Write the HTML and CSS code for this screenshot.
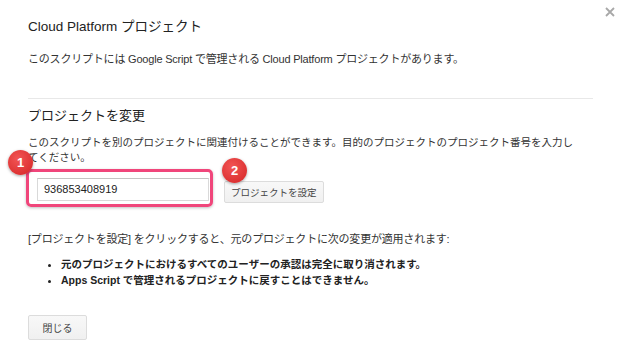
FILE: index.html
```html
<!DOCTYPE html>
<html lang="ja">
<head>
<meta charset="utf-8">
<link rel="stylesheet" href="styles.css">
</head>
<body>
<div class="dialog">
  <svg class="close" width="10" height="10" viewBox="0 0 10 10" aria-hidden="true"><path d="M1 1 L9 9 M9 1 L1 9" stroke="#a8a8a8" stroke-width="1.8" fill="none"/></svg>
  <h1 class="title">Cloud Platform プロジェクト</h1>
  <p class="text first">このスクリプトには Google Script で管理される Cloud Platform プロジェクトがあります。</p>
  <hr class="divider">
  <h2 class="subtitle">プロジェクトを変更</h2>
  <p class="text desc">このスクリプトを別のプロジェクトに関連付けることができます。目的のプロジェクトのプロジェクト番号を入力してください。</p>
  <div class="row">
    <div class="highlight">
      <span class="badge badge1">1</span>
      <div class="input">936853408919</div>
    </div>
    <div class="btnwrap">
      <span class="badge badge2">2</span>
      <button class="btn">プロジェクトを設定</button>
    </div>
  </div>
  <p class="text note">[プロジェクトを設定] をクリックすると、元のプロジェクトに次の変更が適用されます:</p>
  <ul class="list">
    <li>元のプロジェクトにおけるすべてのユーザーの承認は完全に取り消されます。</li>
    <li>Apps Script で管理されるプロジェクトに戻すことはできません。</li>
  </ul>
  <button class="btn close-btn">閉じる</button>
</div>
</body>
</html>
```
FILE: styles.css
```css
* { box-sizing: border-box; }
html, body { margin: 0; padding: 0; background: #fff; }
body {
  font-family: "Liberation Sans", Arial, "Noto Sans CJK JP", sans-serif;
  color: #222;
  width: 625px;
  height: 364px;
  overflow: hidden;
}
.dialog {
  position: relative;
  padding: 18px 32px 0 28px;
}
.close {
  position: absolute;
  top: 7px;
  right: 10px;
  display: block;
}
.title {
  margin: 0;
  font-size: 13.5px;
  font-weight: normal;
  line-height: 18px;
  color: #222;
}
.text {
  margin: 0;
  font-size: 11px;
  line-height: 15px;
  color: #333;
}
.first { margin-top: 16px; letter-spacing: -0.2px; }
.divider {
  margin: 31px 0 0 0;
  border: 0;
  border-top: 1px solid #e8e8e8;
  height: 0;
}
.subtitle {
  margin: 8px 0 0 0;
  font-size: 13px;
  font-weight: normal;
  line-height: 18px;
  color: #222;
}
.desc { margin-top: 10px; font-size: 10.5px; max-width: 554px; }
.row {
  display: flex;
  align-items: flex-start;
  margin-top: 4px;
  margin-left: -2px;
}
.highlight {
  position: relative;
  width: 187px;
  height: 38px;
  border: 3px solid #f0467b;
  border-radius: 5px;
  padding: 6px 0 0 8px;
  box-shadow: 0 1px 3px rgba(0,0,0,0.25);
}
.input {
  width: 172px;
  height: 23px;
  border: 1px solid #d9d9d9;
  border-top-color: #c4c4c4;
  background: #fff;
  font-size: 11px;
  line-height: 21px;
  padding-left: 6px;
  color: #222;
}
.btnwrap {
  position: relative;
  margin-left: 11px;
  margin-top: 12px;
}
.btn {
  display: block;
  font-family: "Liberation Sans", Arial, "Noto Sans CJK JP", sans-serif;
  font-size: 9.5px;
  color: #444;
  background: linear-gradient(#f8f8f8, #f0f0f0);
  border: 1px solid #dcdcdc;
  border-radius: 2px;
  height: 22px;
  padding: 0 6px;
}
.badge {
  position: absolute;
  width: 25px;
  height: 25px;
  border-radius: 50%;
  background: radial-gradient(circle at 40% 35%, #f25555, #d42424);
  color: #fff;
  font-size: 13px;
  font-weight: bold;
  line-height: 25px;
  text-align: center;
  box-shadow: 0 1px 3px rgba(0,0,0,0.35);
  z-index: 2;
}
.badge1 { left: -21px; top: -22px; }
.badge2 { left: -2px; top: -23px; }
.note { margin-top: 25px; letter-spacing: -0.2px; }
.list {
  margin: 9px 0 0 0;
  padding-left: 33px;
  font-size: 10.5px;
  line-height: 16px;
  font-weight: bold;
  color: #222;
}
.close-btn {
  margin-top: 27px;
  width: 59px;
  height: 25px;
  font-size: 10px;
}
```
